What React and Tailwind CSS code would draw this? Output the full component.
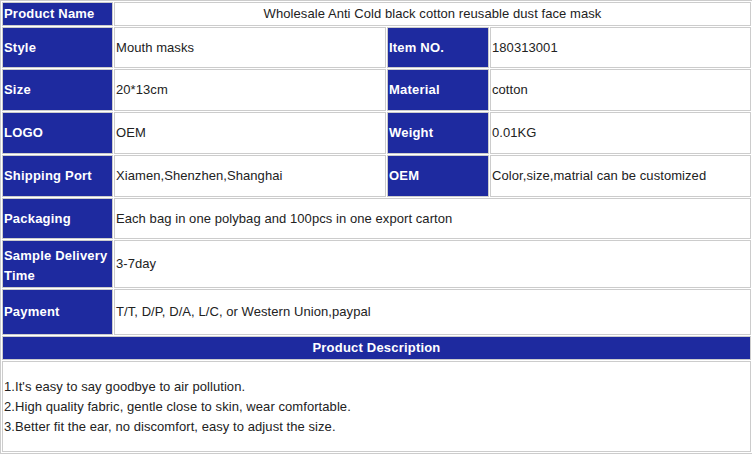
import React from 'react';

const rows = [
    { h: 'h-[41px]', cells: [['Style', 'Mouth masks'], ['Item NO.', '180313001']] },
    { h: 'h-[42px]', cells: [['Size', '20*13cm'], ['Material', 'cotton']] },
    { h: 'h-[42px]', cells: [['LOGO', 'OEM'], ['Weight', '0.01KG']] },
    { h: 'h-[42px]', cells: [['Shipping Port', 'Xiamen,Shenzhen,Shanghai'], ['OEM', 'Color,size,matrial can be customized']] },
];

const wideRows = [
    { h: 'h-[41px]', label: 'Packaging', value: 'Each bag in one polybag and 100pcs in one export carton' },
    { h: 'h-[48px]', label: <>Sample Delivery<br />Time</>, value: '3-7day', pad: 'pt-[3px]' },
    { h: 'h-[46px]', label: 'Payment', value: 'T/T, D/P, D/A, L/C, or Western Union,paypal' },
];

const Label = ({ children, className = 'w-[111px]' }) => (
    <div className={`${className} shrink-0 border border-[#cccccc] bg-[#1e2a9f] flex items-center px-px font-bold text-white tracking-[0.2px]`}>
        <span>{children}</span>
    </div>
);

const Value = ({ children, className = 'flex-1' }) => (
    <div className={`${className} border border-[#cccccc] bg-white flex items-center px-px text-[#222]`}>
        <span>{children}</span>
    </div>
);

const App = () => {
    return (
        <div className="w-[752px] h-[454px] overflow-hidden bg-white">
            <div
                className="w-[753px] border border-[#cccccc] p-px flex flex-col gap-px text-[13px] leading-5 tracking-[0.07px]"
                style={{ fontFamily: '"Liberation Sans", Arial, sans-serif' }}
            >
                <div className="flex gap-px h-[24px]">
                    <Label>Product Name</Label>
                    <div className="flex-1 border border-[#cccccc] flex items-center justify-center text-[#222]">
                        Wholesale Anti Cold black cotton reusable dust face mask
                    </div>
                </div>

                {rows.map((row, i) => (
                    <div key={i} className={`flex gap-px ${row.h}`}>
                        <Label>{row.cells[0][0]}</Label>
                        <Value className="w-[272px] shrink-0">{row.cells[0][1]}</Value>
                        <Label className="w-[102px]">{row.cells[1][0]}</Label>
                        <Value>{row.cells[1][1]}</Value>
                    </div>
                ))}

                {wideRows.map((row, i) => (
                    <div key={i} className={`flex gap-px ${row.h}`}>
                        <Label className={`w-[111px] ${row.pad || ''}`}>{row.label}</Label>
                        <Value>{row.value}</Value>
                    </div>
                ))}

                <div className="h-[24px] border border-[#cccccc] bg-[#1e2a9f] flex items-center justify-center font-bold text-white tracking-[0.2px]">
                    Product Description
                </div>

                <div className="h-[91px] border border-[#cccccc] flex items-center px-px text-[#222]">
                    <div>
                        <p>1.It's easy to say goodbye to air pollution.</p>
                        <p>2.High quality fabric, gentle close to skin, wear comfortable.</p>
                        <p>3.Better fit the ear, no discomfort, easy to adjust the size.</p>
                    </div>
                </div>
            </div>
        </div>
    );
};

export default App;
